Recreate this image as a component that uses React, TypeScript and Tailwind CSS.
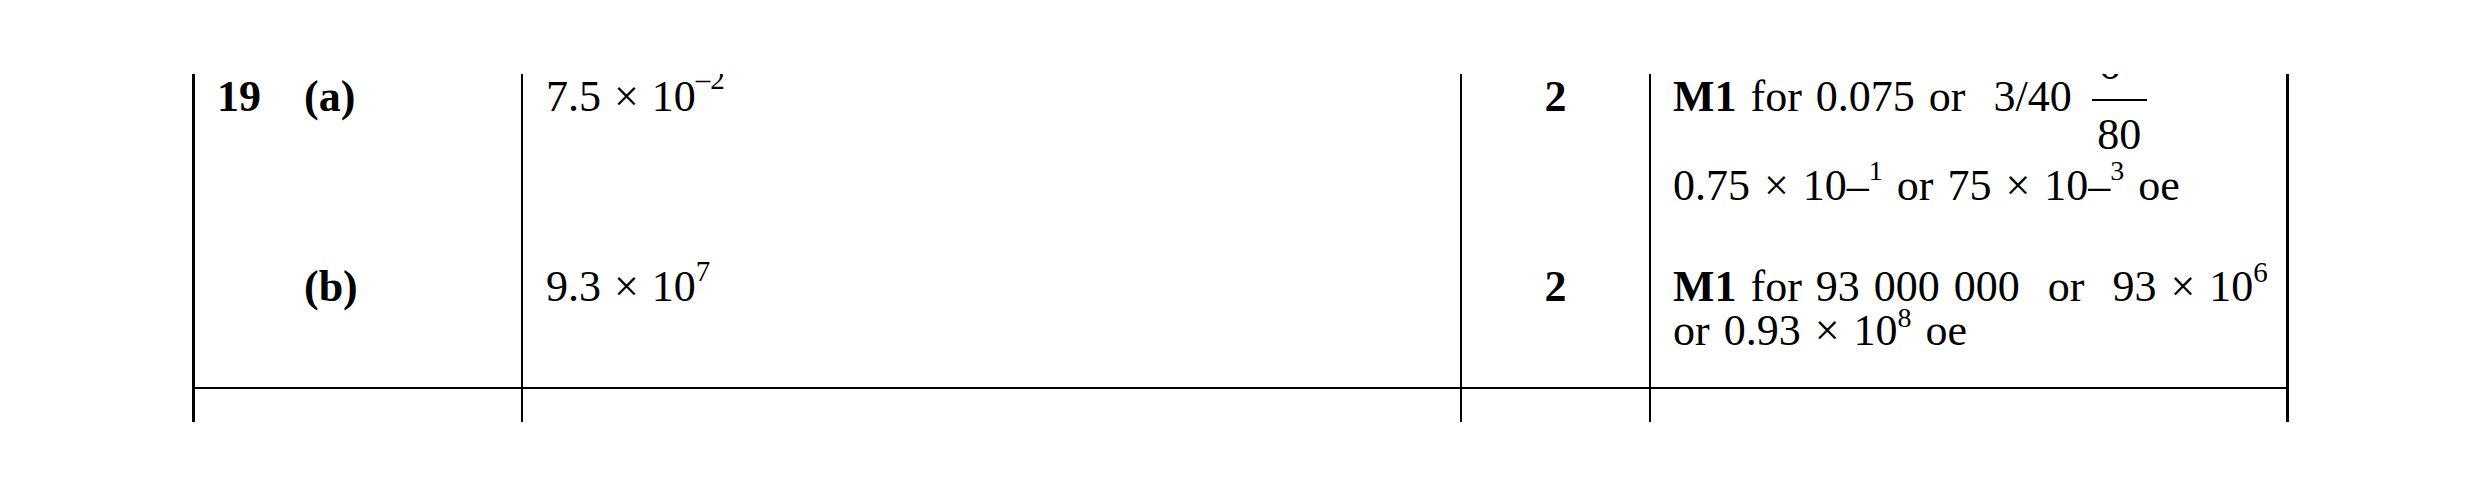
import React from 'react';

const Sup = ({ children, className }: { children: React.ReactNode; className: string }) => (
  <span className={`relative leading-none text-[28px] ${className}`}>{children}</span>
);

const App = () => {
  return (
    <div className="w-[2480px] h-[497px] bg-white pt-[74px] font-['Liberation_Serif','Times_New_Roman',serif] text-[44px] leading-[44px] text-black">
      <div className="ml-[192px] w-[2097px] h-[348px] overflow-hidden border-x-[3px] border-black">
        {/* part (a) */}
        <div className="flex h-[190px]">
          <div className="w-[328px] border-r-2 border-black pl-[22px] pt-px flex font-bold">
            <span className="w-[87px]">19</span>
            <span>(a)</span>
          </div>
          <div className="w-[939px] border-r-2 border-black pl-[23px] pt-px whitespace-pre [word-spacing:2px]">
            7.5 × 10<Sup className="top-[-22px] text-[29px]">–2</Sup>
          </div>
          <div className="w-[189px] border-r-2 border-black pt-px text-center font-bold">2</div>
          <div className="flex-1 pl-[22px] pt-px [word-spacing:3px]">
            <div className="flex h-[89px] whitespace-pre">
              <span>
                <b>M1</b> for 0.075 or  3/40
              </span>
              <span className="ml-[20px] mt-[-32px] flex w-[55px] flex-col items-center self-start">
                <span className="h-[44px] pr-[20px]">6</span>
                <span className="mt-[12px] h-[2px] w-full bg-black" />
                <span className="mt-[12px] h-[44px]">80</span>
              </span>
            </div>
            <div className="whitespace-pre">
              0.75 × 10–<Sup className="top-[-20px]">1</Sup> or 75 × 10–<Sup className="top-[-20px]">3</Sup> oe
            </div>
          </div>
        </div>

        {/* part (b) */}
        <div className="flex h-[125px] border-b-2 border-black">
          <div className="w-[328px] border-r-2 border-black pl-[22px] pt-px flex font-bold">
            <span className="w-[87px]" />
            <span>(b)</span>
          </div>
          <div className="w-[939px] border-r-2 border-black pl-[23px] pt-px whitespace-pre [word-spacing:2px]">
            9.3 × 10<Sup className="top-[-20px] text-[29px]">7</Sup>
          </div>
          <div className="w-[189px] border-r-2 border-black pt-px text-center font-bold">2</div>
          <div className="flex-1 pl-[22px] pt-px [word-spacing:3px]">
            <div className="whitespace-pre">
              <b>M1</b> for 93 000 000  or  93 × 10<Sup className="top-[-19px] text-[29px]">6</Sup>
            </div>
            <div className="whitespace-pre">
              or 0.93 × 10<Sup className="top-[-18px]">8</Sup> oe
            </div>
          </div>
        </div>

        {/* next question, cut off */}
        <div className="flex h-[40px]">
          <div className="w-[328px] border-r-2 border-black" />
          <div className="w-[939px] border-r-2 border-black" />
          <div className="w-[189px] border-r-2 border-black" />
          <div className="flex-1" />
        </div>
      </div>
    </div>
  );
};

export default App;
